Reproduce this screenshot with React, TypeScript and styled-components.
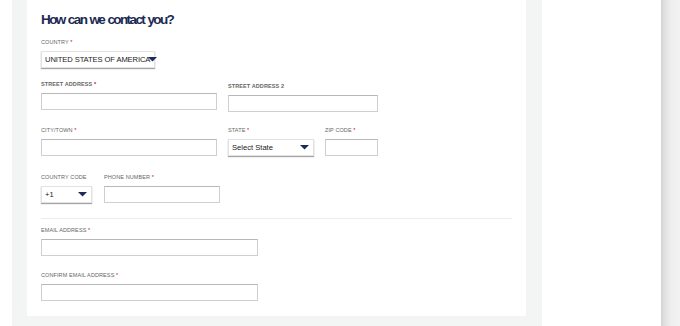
import React from "react";
import styled, { createGlobalStyle } from "styled-components";

const GlobalStyle = createGlobalStyle`
  html, body {
    margin: 0;
    padding: 0;
    background: #ffffff;
  }
  body {
    font-family: "Liberation Sans", Arial, sans-serif;
    color: #333;
  }
`;

interface FieldProps {
  label: string;
  required?: boolean;
  width: number;
  bold?: boolean;
  select?: string;
  upper?: boolean;
}

const Field: React.FC<FieldProps> = ({
  label,
  required,
  width,
  bold,
  select,
  upper,
}) => {
  return (
    <FieldBox $width={width}>
      <Label $bold={bold}>
        {label}
        {required && <Required> *</Required>}
      </Label>
      {select !== undefined ? (
        <SelectBox>
          <SelectText $upper={upper}>{select}</SelectText>
          <Arrow viewBox="0 0 10 5">
            <path d="M0 0 L10 0 L5 5 Z" fill="#1c2b5a" />
          </Arrow>
        </SelectBox>
      ) : (
        <InputBox type="text" />
      )}
    </FieldBox>
  );
};

const App: React.FC = () => {
  return (
    <>
      <GlobalStyle />
      <Page>
        <EdgeStrip />
        <Main>
          <Card>
            <Heading>How can we contact you?</Heading>
            <Row $top={11}>
              <Field
                label="COUNTRY"
                required
                width={114}
                select="UNITED STATES OF AMERICA"
                upper
              />
            </Row>
            <Row $top={13} $gap={11}>
              <Field label="STREET ADDRESS" required width={176} bold />
              <Shifted>
                <Field label="STREET ADDRESS 2" width={150} bold />
              </Shifted>
            </Row>
            <Row $top={15} $gap={11}>
              <Field label="CITY/TOWN" required width={176} />
              <Field label="STATE" required width={86} select="Select State" />
              <Field label="ZIP CODE" required width={53} />
            </Row>
            <Row $top={18} $gap={12}>
              <Field label="COUNTRY CODE" width={51} select="+1" />
              <Field label="PHONE NUMBER" required width={116} />
            </Row>
            <Divider />
            <Row $top={8}>
              <Field label="EMAIL ADDRESS" required width={217} />
            </Row>
            <Row $top={16}>
              <Field label="CONFIRM EMAIL ADDRESS" required width={217} />
            </Row>
          </Card>
        </Main>
        <Sidebar />
        <ShadowStrip />
      </Page>
    </>
  );
};

export default App;

const Page = styled.div`
  display: flex;
  width: 680px;
  height: 326px;
  overflow: hidden;
`;

const EdgeStrip = styled.div`
  width: 12px;
  background: #ffffff;
`;

const Main = styled.div`
  width: 530px;
  background: #f3f4f4;
  padding: 0 16px 10px 15px;
  box-sizing: border-box;
`;

const Card = styled.div`
  background: #ffffff;
  height: 100%;
  padding: 11px 14px 0 14px;
  box-sizing: border-box;
`;

const Heading = styled.h2`
  margin: 0;
  font-family: "Liberation Sans", Arial, sans-serif;
  font-size: 13.5px;
  font-weight: 700;
  letter-spacing: -1.6px;
  word-spacing: 1px;
  line-height: 17px;
  color: #1b2a52;
`;

const Row = styled.div<{ $top: number; $gap?: number }>`
  display: flex;
  align-items: flex-start;
  gap: ${(p) => p.$gap ?? 0}px;
  margin-top: ${(p) => p.$top}px;
`;

const Shifted = styled.div`
  margin-top: 2px;
`;

const FieldBox = styled.div<{ $width: number }>`
  display: flex;
  flex-direction: column;
  width: ${(p) => p.$width}px;
`;

const Label = styled.div<{ $bold?: boolean }>`
  font-size: 5.5px;
  line-height: 6px;
  height: 6px;
  text-transform: uppercase;
  color: #666;
  font-weight: ${(p) => (p.$bold ? 700 : 400)};
  letter-spacing: 0.1px;
  margin-bottom: 6px;
  white-space: nowrap;
`;

const Required = styled.span`
  color: #d0021b;
`;

const InputBox = styled.input`
  box-sizing: border-box;
  width: 100%;
  height: 17px;
  margin: 0;
  padding: 0 4px;
  border: 1px solid #cfcfcf;
  border-top-color: #b8b8b8;
  background: #ffffff;
  outline: none;
`;

const SelectBox = styled.div`
  box-sizing: border-box;
  height: 17px;
  display: flex;
  align-items: center;
  justify-content: space-between;
  padding: 0 4px 0 3px;
  border: 1px solid #e2e2e2;
  box-shadow: 0 1px 1px rgba(0, 0, 0, 0.35);
  background: #ffffff;
`;

const SelectText = styled.span<{ $upper?: boolean }>`
  font-size: 7.6px;
  color: #222;
  white-space: nowrap;
  letter-spacing: ${(p) => (p.$upper ? "-0.1px" : "0")};
`;

const Arrow = styled.svg`
  width: 9px;
  height: 4.5px;
  flex: none;
  margin-left: -2px;
`;

const Divider = styled.div`
  height: 1px;
  background: #ececec;
  margin-top: 15px;
`;

const Sidebar = styled.div`
  width: 119px;
  background: #ffffff;
`;

const ShadowStrip = styled.div`
  flex: 1;
  background: linear-gradient(
    to right,
    #d2d2d2 0px,
    #dcdcdc 2px,
    #e6e6e6 6px,
    #eeeeee 10px,
    #f2f2f2 19px
  );
`;
